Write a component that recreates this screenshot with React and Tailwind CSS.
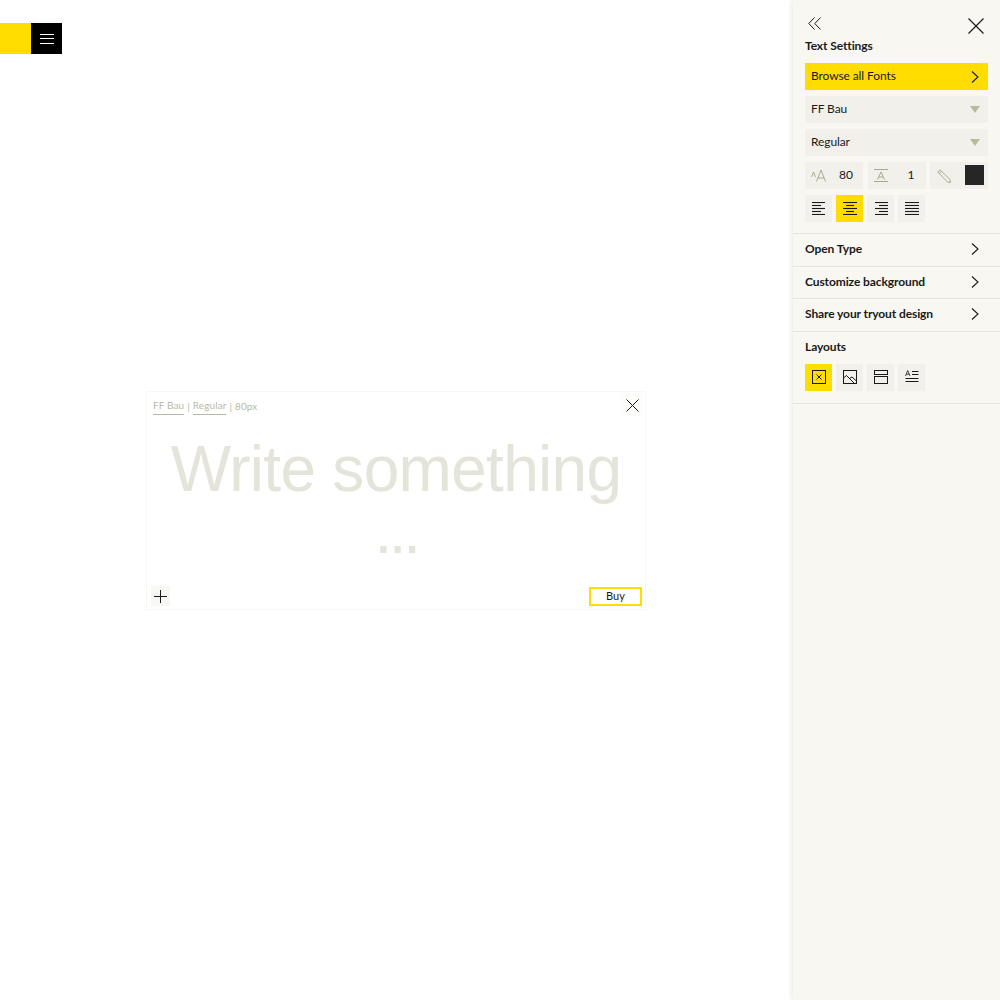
import React from 'react';

const Chevron = ({ className = '' }) => (
    <svg width="8" height="12" viewBox="0 0 8 12" fill="none" stroke="#1a1a1a" strokeWidth="1.1" className={className}>
        <path d="M1 0.5 L7 6 L1 11.5" />
    </svg>
);

const Caret = () => (
    <svg width="10" height="7" viewBox="0 0 10 7" fill="#b9b9a0">
        <path d="M0 0 H10 L5 7 Z" />
    </svg>
);

const AlignIcon = ({ lines }) => (
    <svg width="14" height="13" viewBox="0 0 14 13" stroke="#1a1a1a" strokeWidth="1.1">
        {lines.map(([x1, x2], i) => (
            <path key={i} d={`M${x1} ${i * 3 + 0.5} H${x2}`} />
        ))}
    </svg>
);

const aligns = [
    [[0, 13], [0, 9], [0, 13], [0, 9], [0, 13]],
    [[0, 14], [3, 11], [0, 14], [3, 11], [0, 14]],
    [[1, 14], [5, 14], [1, 14], [5, 14], [1, 14]],
    [[0, 14], [0, 14], [0, 14], [0, 14], [0, 14]],
];

const layouts = [
    <svg key="a" width="14" height="14" viewBox="0 0 14 14" fill="none" stroke="#1a1a1a">
        <rect x="0.5" y="0.5" width="13" height="13" />
        <path d="M4.5 4.5 L9.5 9.5 M9.5 4.5 L4.5 9.5" />
    </svg>,
    <svg key="b" width="14" height="14" viewBox="0 0 14 14" fill="none" stroke="#1a1a1a">
        <rect x="0.5" y="0.5" width="13" height="13" />
        <path d="M0.5 8 L3.5 5.5 L11.5 13.5 M6.5 8.5 L9 7 L13.5 11" />
    </svg>,
    <svg key="c" width="14" height="14" viewBox="0 0 14 14" fill="none" stroke="#1a1a1a">
        <rect x="0.5" y="0.5" width="13" height="4" />
        <rect x="0.5" y="6.5" width="13" height="7" />
    </svg>,
    <svg key="d" width="14" height="14" viewBox="0 0 14 14" fill="none" stroke="#1a1a1a">
        <path d="M0.5 6 L2.7 0.5 L5 6 M1.3 4.2 H4.2" strokeWidth="0.8" />
        <path d="M7 1.5 H13.5 M7 4.5 H13.5 M0.5 8.5 H13.5 M0.5 11.5 H13.5" />
    </svg>,
];

const Section = ({ title }) => (
    <div className="flex h-[32.5px] items-center justify-between border-b border-[#e6e5df] pb-[1px] pl-3 pr-[21px]">
        <span className="text-[12px] font-bold tracking-[-0.1px] text-[#1a1a1a]">{title}</span>
        <Chevron />
    </div>
);

const Select = ({ label }) => (
    <div className="flex h-[27px] items-center justify-between bg-[#f1f0eb] pb-[1px] pl-[6px] pr-2">
        <span className="text-[12px] tracking-[-0.1px] text-[#1a1a1a]">{label}</span>
        <Caret />
    </div>
);

export default function App() {
    return (
        <div className="flex min-h-[1000px] bg-white font-['Lato',sans-serif]">
            <main className="flex-1">
                <div className="flex pt-[23px]">
                    <div className="h-[31px] w-[31px] bg-[#ffdd00]" />
                    <div className="flex h-[31px] w-[31px] flex-col items-center justify-center gap-[3.5px] bg-black">
                        <div className="h-px w-[14px] bg-white" />
                        <div className="h-px w-[14px] bg-white" />
                        <div className="h-px w-[14px] bg-white" />
                    </div>
                </div>

                <div className="ml-[146px] mt-[337px] flex h-[219px] w-[500px] flex-col border border-[#f7f7f4] bg-white">
                    <div className="flex items-start justify-between pl-[6px] pr-[2px] pt-[2px]">
                        <div className="flex items-center gap-[3px] pt-[4px] text-[10px] tracking-[0.1px] text-[#b9b9a0]">
                            <span className="border-b border-[#b9b9a0] pb-[1px]">FF Bau</span>
                            <span>|</span>
                            <span className="border-b border-[#b9b9a0] pb-[1px]">Regular</span>
                            <span>|</span>
                            <span>80px</span>
                        </div>
                        <div className="flex h-[22px] w-[22px] items-center justify-center bg-[#fdfdfc]">
                            <svg width="13" height="13" viewBox="0 0 13 13" stroke="#1a1a1a" strokeWidth="1">
                                <path d="M0.5 0.5 L12.5 12.5 M12.5 0.5 L0.5 12.5" />
                            </svg>
                        </div>
                    </div>
                    <div className="mt-[22px] text-center font-['Liberation_Sans',sans-serif] text-[64px] leading-[62px] tracking-[-0.7px] text-[#e4e4da]">
                        Write something
                        <br />
                        <span className="tracking-[-3.5px]">...</span>
                    </div>
                    <div className="mt-auto flex items-end justify-between pb-[3px] pl-[4px] pr-[3px]">
                        <div className="flex h-[20px] w-[19px] items-center justify-center bg-[#f7f7f3]">
                            <svg width="13" height="13" viewBox="0 0 13 13" stroke="#1a1a1a" strokeWidth="1">
                                <path d="M6.5 0 V13 M0 6.5 H13" />
                            </svg>
                        </div>
                        <div className="flex h-[19px] w-[53px] items-center justify-center border-2 border-[#ffdd00] text-[11px] text-[#1a1a1a]">
                            Buy
                        </div>
                    </div>
                </div>
            </main>

            <aside className="w-[207px] bg-[#f8f7f2] shadow-[-2px_0_4px_rgba(0,0,0,0.08)]">
                <div className="border-b border-[#e6e5df] pb-[11px]">
                    <div className="flex items-start justify-between pl-[15px] pr-4 pt-[17px]">
                        <svg width="13" height="13" viewBox="0 0 13 13" fill="none" stroke="#1a1a1a">
                            <path d="M6.5 0.5 L0.8 6.5 L6.5 12.5 M12.5 0.5 L6.8 6.5 L12.5 12.5" />
                        </svg>
                        <svg width="16" height="16" viewBox="0 0 16 16" stroke="#1a1a1a" strokeWidth="1.2" className="mt-[1px]">
                            <path d="M0.5 0.5 L15.5 15.5 M15.5 0.5 L0.5 15.5" />
                        </svg>
                    </div>
                    <div className="px-3">
                        <div className="mt-[2px] text-[12px] font-bold leading-[20px] tracking-[-0.1px] text-[#1a1a1a]">Text Settings</div>
                        <div className="mb-[6px] mt-[7px] flex h-[27px] w-[183px] items-center justify-between bg-[#ffdd00] pb-[1px] pl-[6px] pr-[9px]">
                            <span className="text-[12px] tracking-[-0.1px] text-[#1a1a1a]">Browse all Fonts</span>
                            <Chevron className="mt-[2px]" />
                        </div>
                        <div className="flex w-[183px] flex-col gap-[6px]">
                            <Select label="FF Bau" />
                            <Select label="Regular" />
                        </div>
                        <div className="mt-[6px] flex w-[183px] justify-between">
                            <div className="flex h-[27px] w-[58px] items-center bg-[#f1f0eb] pl-[6px]">
                                <svg width="16" height="13" viewBox="0 0 16 13" fill="none" stroke="#a9a990">
                                    <path d="M0.5 8 L2.5 3 L4.5 8 M5.5 12.5 L10 1 L14.5 12.5 M7 9 H13" />
                                </svg>
                                <span className="mb-[2px] ml-[12px] text-[12px] text-[#1a1a1a]">80</span>
                            </div>
                            <div className="flex h-[27px] w-[58px] items-center bg-[#f1f0eb] pl-[6px]">
                                <svg width="14" height="13" viewBox="0 0 14 13" fill="none" stroke="#a9a990">
                                    <path d="M0 0.5 H14 M0 12.5 H14 M3.5 10.5 L7 3 L10.5 10.5 M5 8 H9" />
                                </svg>
                                <span className="mb-[2px] ml-[20px] text-[12px] text-[#1a1a1a]">1</span>
                            </div>
                            <div className="flex h-[27px] w-[58px] items-center justify-between bg-[#f1f0eb] pl-[7px] pr-[4px]">
                                <svg width="14" height="14" viewBox="0 0 14 14" fill="none" stroke="#a9a990">
                                    <path d="M0.8 3 L3 0.8 L13 10.5 L13.5 13.5 L10.5 13 Z M2.2 4.5 L4.5 2.2" />
                                </svg>
                                <div className="mb-[1px] h-[20px] w-[19px] bg-[#262626]" />
                            </div>
                        </div>
                        <div className="mt-[6px] flex gap-1">
                            {aligns.map((lines, i) => (
                                <div key={i} className={`flex h-[27px] w-[27px] items-center justify-center ${i === 1 ? 'bg-[#ffdd00]' : 'bg-[#f1f0eb]'}`}>
                                    <AlignIcon lines={lines} />
                                </div>
                            ))}
                        </div>
                    </div>
                </div>

                <Section title="Open Type" />
                <Section title="Customize background" />
                <Section title="Share your tryout design" />

                <div className="border-b border-[#e6e5df] px-3 pb-3 pt-[5px]">
                    <div className="text-[12px] font-bold leading-[20px] tracking-[-0.1px] text-[#1a1a1a]">Layouts</div>
                    <div className="mt-[7px] flex gap-1">
                        {layouts.map((icon, i) => (
                            <div key={i} className={`flex h-[27px] w-[27px] items-center justify-center ${i === 0 ? 'bg-[#ffdd00]' : 'bg-[#f1f0eb]'}`}>
                                {icon}
                            </div>
                        ))}
                    </div>
                </div>
            </aside>
        </div>
    );
}
